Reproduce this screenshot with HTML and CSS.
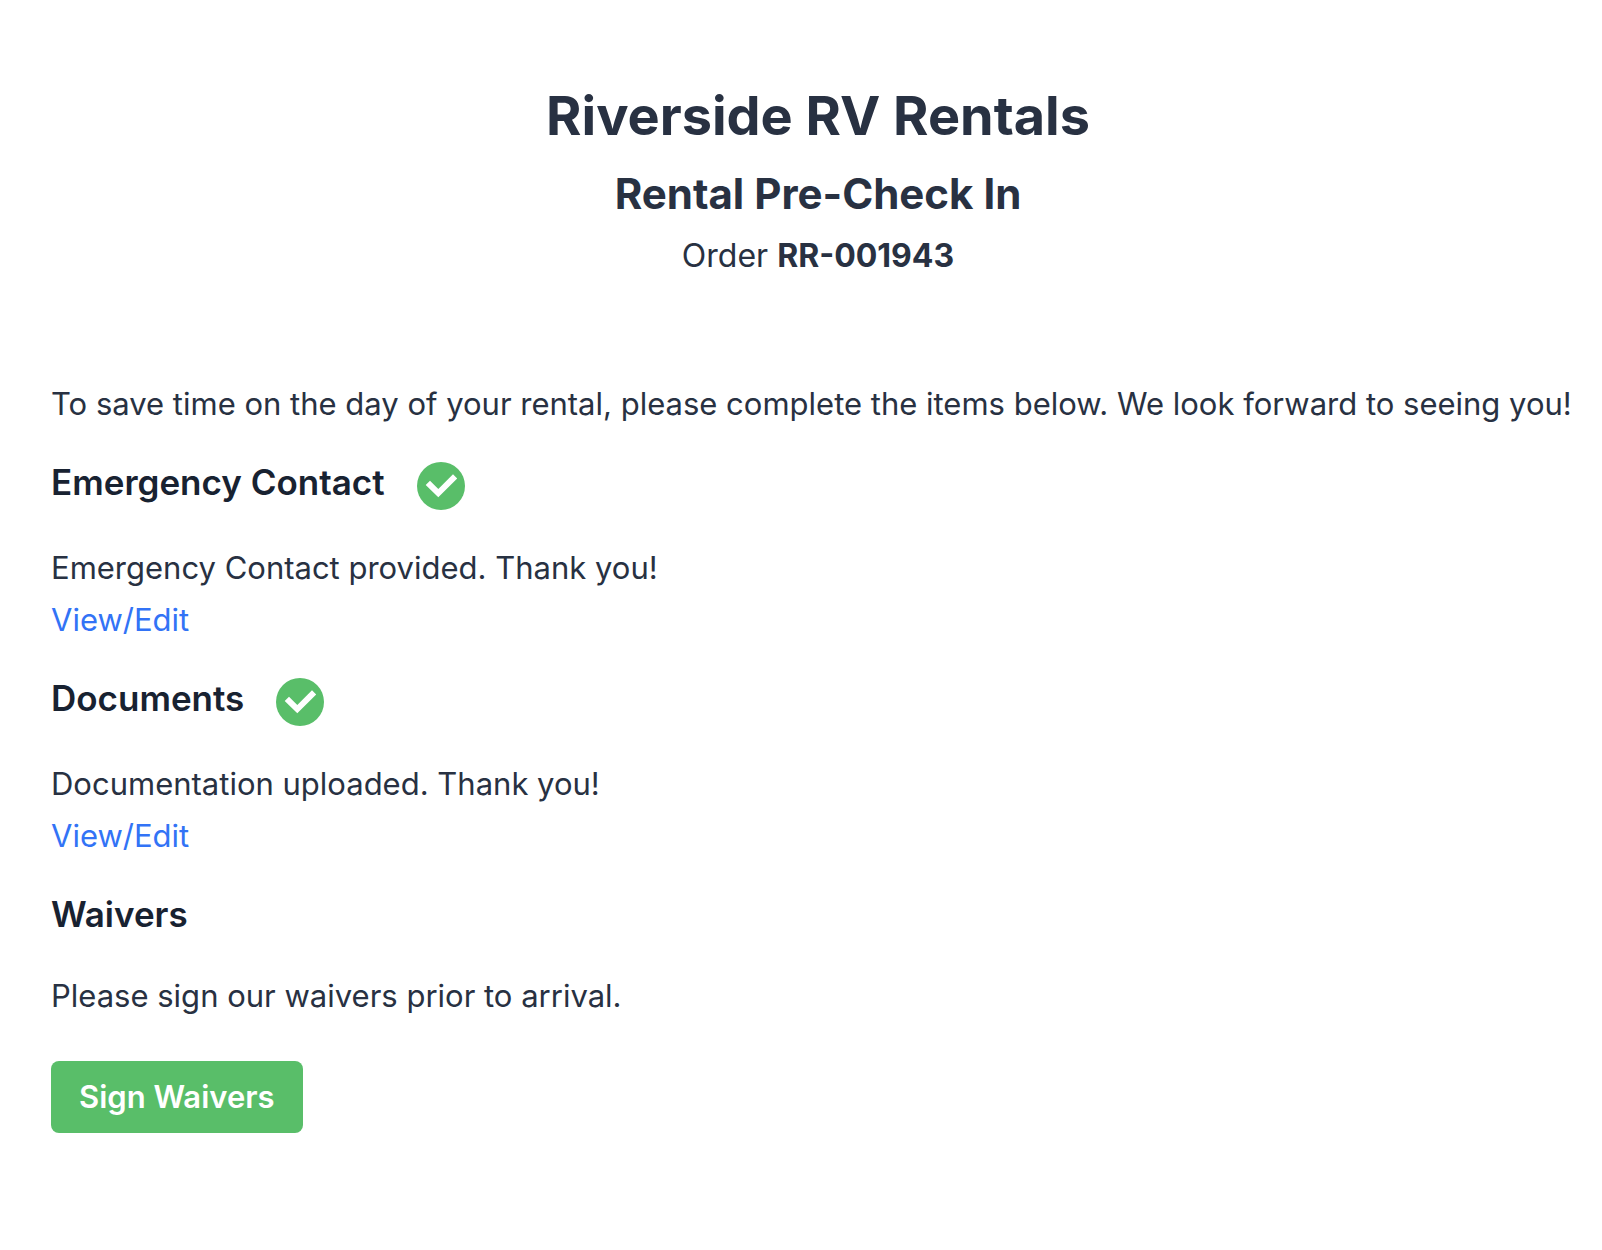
FILE: index.html
```html
<!DOCTYPE html>
<html lang="en">
<head>
<meta charset="utf-8">
<meta name="viewport" content="width=device-width, initial-scale=1">
<title>Rental Pre-Check In</title>
<link rel="stylesheet" href="styles.css">
</head>
<body>
<main class="page">
  <header class="page-header">
    <h1 class="company">Riverside RV Rentals</h1>
    <h2 class="title">Rental Pre-Check In</h2>
    <p class="order">Order <strong>RR-001943</strong></p>
  </header>
  <p class="intro">To save time on the day of your rental, please complete the items below. We look forward to seeing you!</p>
  <section class="item">
    <h3 class="item-title">Emergency Contact
      <svg class="check" viewBox="0 0 48 48" role="img" aria-label="Complete"><circle cx="24" cy="24" r="24" fill="#59be69"/><path d="M8.700 23.100L13 18.800L21.300 27L36 12.200L40.200 16.400L21.300 35.300Z" fill="#fff"/></svg>
    </h3>
    <p>Emergency Contact provided. Thank you!</p>
    <a class="link" href="#contact">View/Edit</a>
  </section>
  <section class="item">
    <h3 class="item-title">Documents
      <svg class="check" viewBox="0 0 48 48" role="img" aria-label="Complete"><circle cx="24" cy="24" r="24" fill="#59be69"/><path d="M8.700 23.100L13 18.800L21.300 27L36 12.200L40.200 16.400L21.300 35.300Z" fill="#fff"/></svg>
    </h3>
    <p>Documentation uploaded. Thank you!</p>
    <a class="link" href="#documents">View/Edit</a>
  </section>
  <section class="item">
    <h3 class="item-title">Waivers</h3>
    <p>Please sign our waivers prior to arrival.</p>
    <button class="button" type="button">Sign Waivers</button>
  </section>
</main>
</body>
</html>
```

FILE: styles.css
```css
* {
  box-sizing: border-box;
}

body {
  margin: 0;
  background: #fff;
  color: #283142;
  font-family: Inter, "Liberation Sans", sans-serif;
  font-size: 31px;
  line-height: 52px;
}

h1, h2, h3, p {
  margin: 0;
}

.page {
  padding: 76px 17px 76px 51px;
}

.page-header {
  margin-bottom: 98px;
  text-align: center;
}

.company {
  font-size: 54px;
  line-height: 80px;
  font-weight: 700;
}

.title {
  margin: 8px 0;
  font-size: 42px;
  line-height: 60px;
  font-weight: 700;
}

.order {
  font-size: 32px;
  line-height: 48px;
}

.intro,
.item {
  margin-bottom: 26px;
}

.item-title {
  display: flex;
  align-items: flex-start;
  gap: 32px;
  margin-bottom: 30px;
  color: #182231;
  font-size: 35px;
  line-height: 52px;
  font-weight: 600;
}

.check {
  width: 48px;
  height: 48px;
  margin: 6px 0 2px;
}

.link {
  display: block;
  color: #3273f6;
  text-decoration: none;
}

.button {
  display: block;
  margin-top: 39px;
  padding: 10px 28px;
  border: 0;
  border-radius: 8px;
  background: #59be69;
  color: #fff;
  font: inherit;
  font-weight: 600;
}
```
